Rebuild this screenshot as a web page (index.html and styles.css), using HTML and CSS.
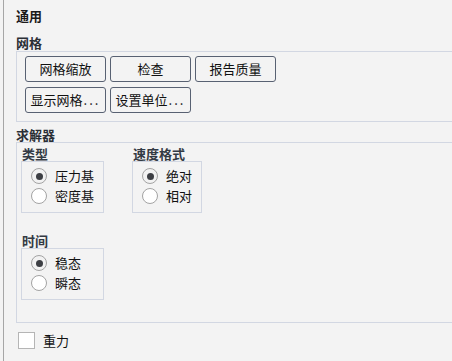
FILE: index.html
```html
<!DOCTYPE html>
<html lang="zh-CN">
<head>
  <meta charset="UTF-8">
  <meta name="viewport" content="width=device-width, initial-scale=1.0">
  <title>通用</title>
  <link rel="stylesheet" href="styles.css">
</head>
<body>
  <div class="panel">
    <h1 class="title">通用</h1>

    <div class="group-label">网格</div>
    <div class="group mesh">
      <div class="btn-row">
        <button>网格缩放</button>
        <button>检查</button>
        <button>报告质量</button>
      </div>
      <div class="btn-row">
        <button>显示网格<span class="dots">...</span></button>
        <button>设置单位<span class="dots">...</span></button>
      </div>
    </div>

    <div class="group-label solver-label">求解器</div>
    <div class="group solver">
      <div class="cols">
        <div class="col">
          <div class="sub-label">类型</div>
          <div class="box box-type">
            <label class="opt"><input type="radio" name="type" checked> 压力基</label>
            <label class="opt"><input type="radio" name="type"> 密度基</label>
          </div>
        </div>
        <div class="col">
          <div class="sub-label">速度格式</div>
          <div class="box box-vel">
            <label class="opt"><input type="radio" name="vel" checked> 绝对</label>
            <label class="opt"><input type="radio" name="vel"> 相对</label>
          </div>
        </div>
      </div>
      <div class="col time">
        <div class="sub-label">时间</div>
        <div class="box box-type">
          <label class="opt"><input type="radio" name="time" checked> 稳态</label>
          <label class="opt"><input type="radio" name="time"> 瞬态</label>
        </div>
      </div>
    </div>

    <label class="check"><input type="checkbox"> 重力</label>
  </div>
</body>
</html>
```

FILE: styles.css
```css
* {
  margin: 0;
  padding: 0;
  box-sizing: border-box;
}
body {
  font-family: "Noto Sans CJK SC", "DejaVu Sans", sans-serif;
  font-size: 13px;
  color: #111;
  background: #f3f3f3;
  height: 100vh;
  overflow: hidden;
}
.panel {
  margin-left: 3px;
  border-left: 1px solid #a6a6a6;
  height: 100vh;
  padding: 8px 0 0 12px;
}
.title {
  font-size: 13px;
  font-weight: bold;
  line-height: 16px;
  color: #1a1a1a;
  margin-bottom: 11px;
}
.group-label {
  font-weight: bold;
  line-height: 16px;
  color: #2b2f36;
}
.group {
  border: 1px solid #d2d7e2;
  border-right: none;
}
.mesh {
  padding: 4px 0 8px 8px;
}
.btn-row {
  display: flex;
  gap: 4px;
}
.btn-row + .btn-row {
  margin-top: 5px;
}
button {
  font-family: inherit;
  font-size: 13px;
  color: #111;
  background: #f3f3f3;
  border: 1px solid #586172;
  border-radius: 3px;
  height: 26px;
  width: 81px;
  line-height: 24px;
  padding: 0;
  white-space: nowrap;
}
.dots {
  letter-spacing: 2px;
  margin-left: 1px;
}
.solver-label {
  margin-top: 5px;
  line-height: 15px;
}
.solver {
  padding: 4px 0 22px 4px;
}
.cols {
  display: flex;
  gap: 28px;
}
.sub-label {
  font-weight: bold;
  line-height: 14px;
  color: #333a44;
  padding-left: 1px;
}
.box {
  border: 1px solid #d2d7e2;
  padding: 4px 0 6px 9px;
}
.box-type {
  width: 83px;
}
.box-vel {
  width: 70px;
}
.time {
  margin-top: 21px;
}
.opt {
  display: flex;
  align-items: center;
  gap: 8px;
  height: 20px;
  line-height: 20px;
}
.opt input {
  appearance: none;
  width: 16px;
  height: 16px;
  border: 1px solid #a3a3a3;
  border-radius: 50%;
  background: #fff;
  display: grid;
  place-items: center;
  margin: 0;
}
.opt input:checked {
  background: #f2f2f2;
}
.opt input:checked::after {
  content: "";
  width: 7px;
  height: 7px;
  border-radius: 50%;
  background: #3d3f44;
}
.check {
  display: flex;
  align-items: center;
  gap: 8px;
  margin: 9px 0 0 2px;
  line-height: 17px;
}
.check input {
  appearance: none;
  width: 17px;
  height: 17px;
  border: 1px solid #b5b5b5;
  background: #fff;
  margin: 0;
}
```
